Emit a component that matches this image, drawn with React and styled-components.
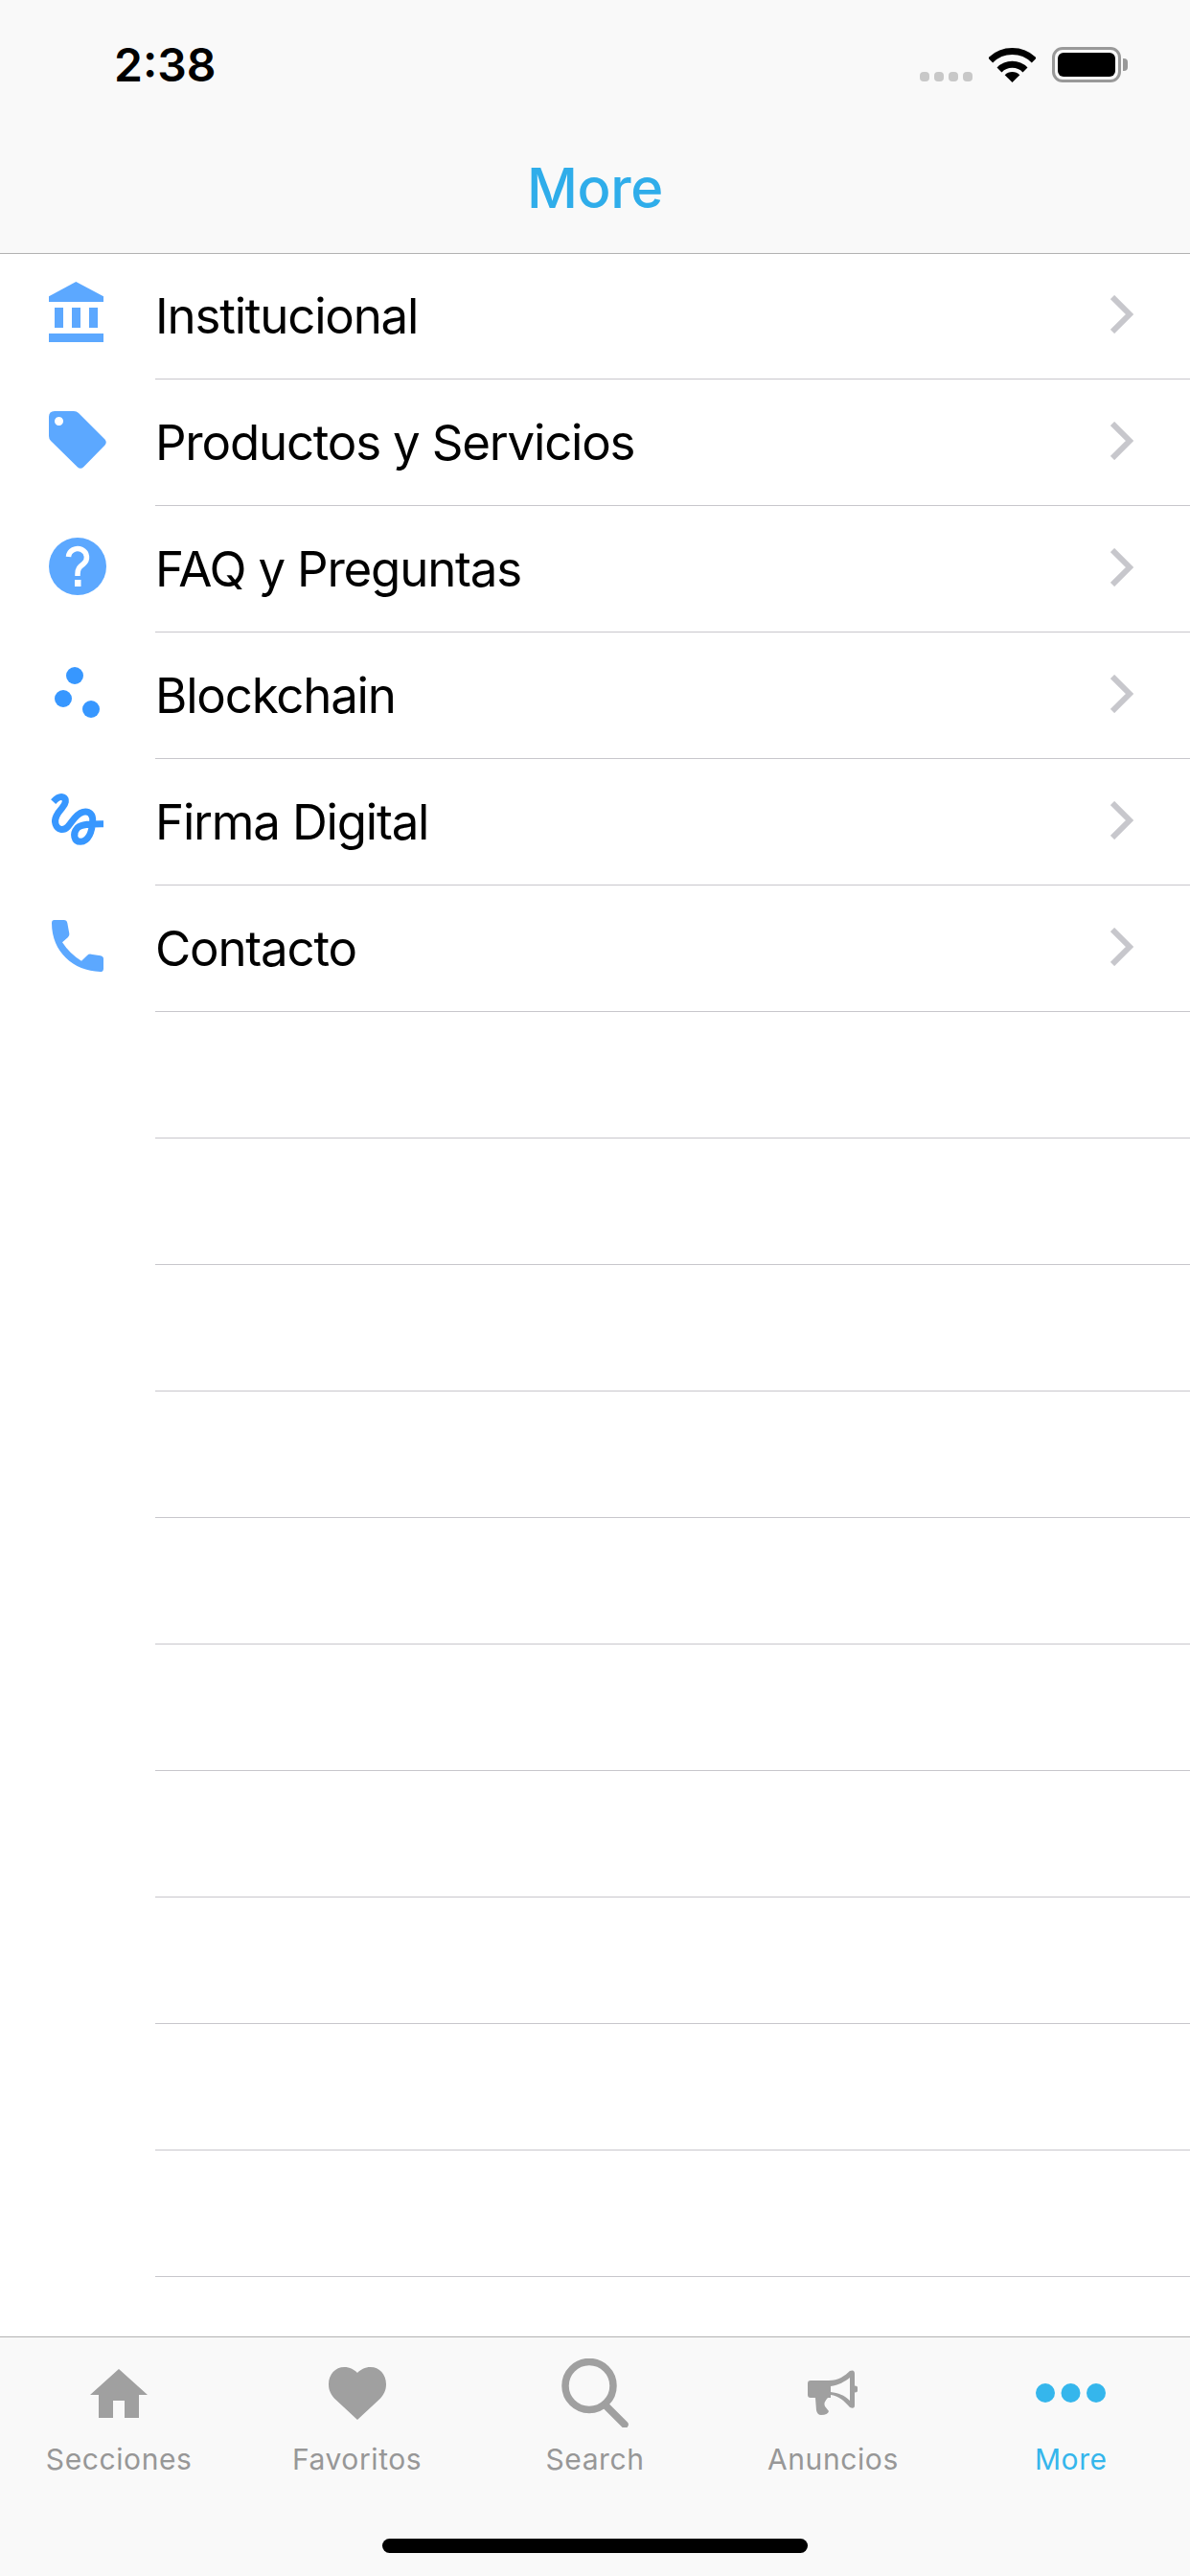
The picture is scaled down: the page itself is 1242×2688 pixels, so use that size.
import React from "react";
import styled, { createGlobalStyle } from "styled-components";

const menuItems = [
  { label: "Institucional", Icon: BankIcon },
  { label: "Productos y Servicios", Icon: TagIcon },
  { label: "FAQ y Preguntas", Icon: QuestionIcon },
  { label: "Blockchain", Icon: DotsIcon },
  { label: "Firma Digital", Icon: SquiggleIcon },
  { label: "Contacto", Icon: PhoneIcon },
];

const EMPTY_ROWS = 10;

const tabs = [
  { label: "Secciones", Icon: HomeIcon },
  { label: "Favoritos", Icon: HeartIcon },
  { label: "Search", Icon: SearchIcon },
  { label: "Anuncios", Icon: MegaphoneIcon },
  { label: "More", Icon: MoreIcon, active: true },
];

function BankIcon() {
  return (
    <MenuSvg viewBox="0 0 60 60" fill="#5ca8ff">
      <path d="M28.3 -3 L57 12.3 V18 H0 V12.3 Z" />
      <rect x="6" y="24" width="9" height="21" />
      <rect x="24" y="24" width="9" height="21" />
      <rect x="42" y="24" width="9" height="21" />
      <rect x="0" y="51" width="57" height="9" />
    </MenuSvg>
  );
}

function TagIcon() {
  return (
    <MenuSvg viewBox="0 0 60 60" fill="#5ca8ff">
      <path
        fillRule="evenodd"
        d="M6 0 H26 Q29 0 31 2 L58.5 29.5 Q61 32.5 58.5 35.5 L36 58.5 Q33 61 30 58.5 L2 31 Q0 29 0 26 V6 Q0 0 6 0 Z M10.5 6 a4.5 4.5 0 1 0 0.01 0 Z"
      />
    </MenuSvg>
  );
}

function QuestionIcon() {
  return (
    <MenuSvg viewBox="0 0 60 60">
      <circle cx="30" cy="30" r="30" fill="#5ca8ff" />
      <path
        d="M20.5 20 a9.5 9 0 1 1 15.5 7.5 c-4 3 -6 5 -6 10.5 v2"
        fill="none"
        stroke="#fff"
        strokeWidth="5.5"
      />
      <rect x="27" y="44" width="6.5" height="7" fill="#fff" />
    </MenuSvg>
  );
}

function DotsIcon() {
  return (
    <MenuSvg viewBox="0 0 60 60" fill="#3797ff">
      <circle cx="27" cy="12" r="9" />
      <circle cx="15" cy="36" r="9" />
      <circle cx="44" cy="47" r="9" />
    </MenuSvg>
  );
}

function SquiggleIcon() {
  return (
    <MenuSvg viewBox="93 135 180 180">
      <path
        d="M107 170 C118 158 128 152 138 156 C150 162 146 176 134 190 C120 206 108 222 114 240 C120 258 138 262 152 248 C166 234 176 208 200 202 C220 198 232 210 230 232 C228 262 218 294 192 295 C172 295 166 270 182 252 C196 238 228 239 264 239"
        fill="none"
        stroke="#3797ff"
        strokeWidth="21"
      />
    </MenuSvg>
  );
}

function PhoneIcon() {
  return (
    <MenuSvg viewBox="93 531 180 180" fill="#5ca8ff">
      <path d="M110 540 H140 Q149 540 151 550 L157 583 Q158 590 153 594 L135 610 Q160 648 195 668 L213 651 Q218 646 225 647 L255 652 Q264 654 264 662 V692 Q264 702 254 702 C170 700 102 640 102 550 Q102 540 110 540 Z" />
    </MenuSvg>
  );
}

function HomeIcon() {
  return (
    <svg width="60" height="51" viewBox="279 147 180 153" fill="#a0a0a0">
      <path d="M369 147 L459 228 H432 V300 H387 V246 H351 V300 H306 V228 H279 Z" />
    </svg>
  );
}

function HeartIcon() {
  return (
    <svg width="60" height="55" viewBox="1029 147 180 165" fill="#a0a0a0">
      <path d="M1119 312 L1052 250 C1036 234 1029 220 1029 200 C1029 170 1050 147 1078 147 C1095 147 1110 155 1119 165 C1128 155 1143 147 1160 147 C1188 147 1209 170 1209 200 C1209 220 1202 234 1186 250 Z" />
    </svg>
  );
}

function SearchIcon() {
  return (
    <svg width="70" height="72" viewBox="0 0 70 72" fill="none" stroke="#a0a0a0">
      <circle cx="29" cy="28.5" r="25" strokeWidth="7.5" />
      <path d="M47 50 L66 69" strokeWidth="7.5" strokeLinecap="round" />
    </svg>
  );
}

function MegaphoneIcon() {
  return (
    <svg width="52" height="48" viewBox="0 0 52 48" fill="#a0a0a0">
      <path
        fillRule="evenodd"
        d="M3 11 H22 C32 11 39 6 44 1 Q49 -1 49 4 V37 Q49 41 44 39 C38 32 32 27 24 26 V29 H3 Q0 29 0 26 V14 Q0 11 3 11 Z M24 17 C32 16 39 12 44 8 V32 C38 26 32 24 24 23 Z"
      />
      <circle cx="49" cy="20" r="3.5" />
      <path d="M8 29 H21 Q16 34 18 38 L22 43 Q21 47 14 47 Q10 47 9 42 Z" />
    </svg>
  );
}

function MoreIcon() {
  return (
    <svg width="73" height="20" viewBox="0 0 73 20" fill="#35b6ec">
      <circle cx="10" cy="10" r="10" />
      <circle cx="36.5" cy="10" r="10" />
      <circle cx="63" cy="10" r="10" />
    </svg>
  );
}

function WifiIcon() {
  return (
    <svg width="49" height="36" viewBox="0 0 49 36" fill="none" stroke="#000">
      <path d="M1.7 13 A32.3 32.3 0 0 1 47.3 13" strokeWidth="7" />
      <path d="M11 23 A19 19 0 0 1 38 23" strokeWidth="7" />
      <path d="M24.5 36 L16.7 28.2 A11 11 0 0 1 32.3 28.2 Z" fill="#000" stroke="none" />
    </svg>
  );
}

function Chevron() {
  return (
    <ChevronSvg width="24" height="40" viewBox="0 0 24 40" fill="none" stroke="#c7c7cc" strokeWidth="6">
      <path d="M2 2 L20 20 L2 38" />
    </ChevronSvg>
  );
}

export default function App() {
  return (
    <>
      <GlobalStyle />
      <Screen>
        <Header>
          <StatusBar>
            <Time>2:38</Time>
            <StatusIcons>
              <SignalDots>
                <SignalDot />
                <SignalDot />
                <SignalDot />
                <SignalDot />
              </SignalDots>
              <WifiIcon />
              <Battery>
                <BatteryFill />
              </Battery>
            </StatusIcons>
          </StatusBar>
          <NavBar>
            <NavTitle>More</NavTitle>
          </NavBar>
        </Header>
        <List>
          {menuItems.map(({ label, Icon }) => (
            <Row key={label}>
              <IconCell>
                <Icon />
              </IconCell>
              <RowBody>
                <RowLabel>{label}</RowLabel>
                <Chevron />
              </RowBody>
            </Row>
          ))}
          {Array.from({ length: EMPTY_ROWS }, (_, i) => (
            <Row key={i}>
              <IconCell />
              <RowBody />
            </Row>
          ))}
        </List>
        <TabBar>
          <Tabs>
            {tabs.map(({ label, Icon, active }) => (
              <Tab key={label}>
                <TabIconSlot>
                  <Icon />
                </TabIconSlot>
                <TabLabel $active={active}>{label}</TabLabel>
              </Tab>
            ))}
          </Tabs>
          <HomeIndicator />
        </TabBar>
      </Screen>
    </>
  );
}

const GlobalStyle = createGlobalStyle`
  body {
    margin: 0;
    background: #fff;
    font-family: Inter, "Liberation Sans", sans-serif;
  }
`;

const Screen = styled.div`
  width: 1242px;
  height: 2688px;
  display: flex;
  flex-direction: column;
  overflow: hidden;
`;

const Header = styled.header`
  height: 264px;
  flex: none;
  background: #f9f9f9;
  box-shadow: 0 1px 0 #b2b2b2;
  position: relative;
  z-index: 1;
`;

const StatusBar = styled.div`
  height: 132px;
  box-sizing: border-box;
  padding: 49px 72px 0 119px;
  display: flex;
  justify-content: space-between;
  align-items: flex-start;
`;

const Time = styled.span`
  font-size: 48px;
  font-weight: 600;
  line-height: 37px;
  color: #000;
`;

const StatusIcons = styled.div`
  display: flex;
  align-items: flex-end;
  gap: 17px;
`;

const SignalDots = styled.div`
  display: flex;
  gap: 5px;
  padding-bottom: 1px;
`;

const SignalDot = styled.span`
  width: 10px;
  height: 10px;
  border-radius: 4px;
  background: #c8c8c8;
`;

const Battery = styled.div`
  width: 72px;
  height: 37px;
  box-sizing: border-box;
  border: 3px solid #999;
  border-radius: 11px;
  padding: 3px;
  position: relative;

  &::after {
    content: "";
    position: absolute;
    right: -10px;
    top: 9px;
    width: 5px;
    height: 13px;
    background: #999;
    border-radius: 0 4px 4px 0;
  }
`;

const BatteryFill = styled.div`
  height: 100%;
  background: #000;
  border-radius: 6px;
`;

const NavBar = styled.div`
  height: 132px;
  display: flex;
  justify-content: center;
  align-items: center;
`;

const NavTitle = styled.h1`
  margin: 0 0 4px;
  font-size: 58px;
  font-weight: 500;
  letter-spacing: -0.3px;
  color: #2fadea;
`;

const List = styled.main`
  flex: 1;
  background: #fff;
  overflow: hidden;
`;

const Row = styled.div`
  height: 132px;
  display: flex;
`;

const IconCell = styled.div`
  width: 162px;
  flex: none;
  box-sizing: border-box;
  padding: 33px 0 0 51px;
`;

const MenuSvg = styled.svg`
  display: block;
  width: 60px;
  height: 60px;
  overflow: visible;
`;

const RowBody = styled.div`
  flex: 1;
  display: flex;
  align-items: center;
  justify-content: space-between;
  padding-right: 59px;
  border-bottom: 1px solid #c8c7cc;
`;

const RowLabel = styled.span`
  font-size: 51px;
  letter-spacing: -1.2px;
  color: #000;
`;

const ChevronSvg = styled.svg`
  margin-bottom: 3px;
`;

const TabBar = styled.nav`
  height: 250px;
  flex: none;
  box-sizing: border-box;
  border-top: 1px solid #b2b2b2;
  background: #f9f9f9;
  display: flex;
  flex-direction: column;
`;

const Tabs = styled.div`
  display: grid;
  grid-template-columns: repeat(5, 1fr);
  padding-top: 20px;
`;

const Tab = styled.div`
  display: flex;
  flex-direction: column;
  align-items: center;
`;

const TabIconSlot = styled.div`
  height: 76px;
  display: flex;
  align-items: center;
  justify-content: center;
`;

const TabLabel = styled.span`
  margin-top: 13px;
  font-size: 30px;
  line-height: 36px;
  letter-spacing: 0.6px;
  color: ${(props) => (props.$active ? "#35b6ec" : "#979797")};
`;

const HomeIndicator = styled.div`
  width: 444px;
  height: 15px;
  margin: auto auto 24px;
  border-radius: 8px;
  background: #000;
`;
